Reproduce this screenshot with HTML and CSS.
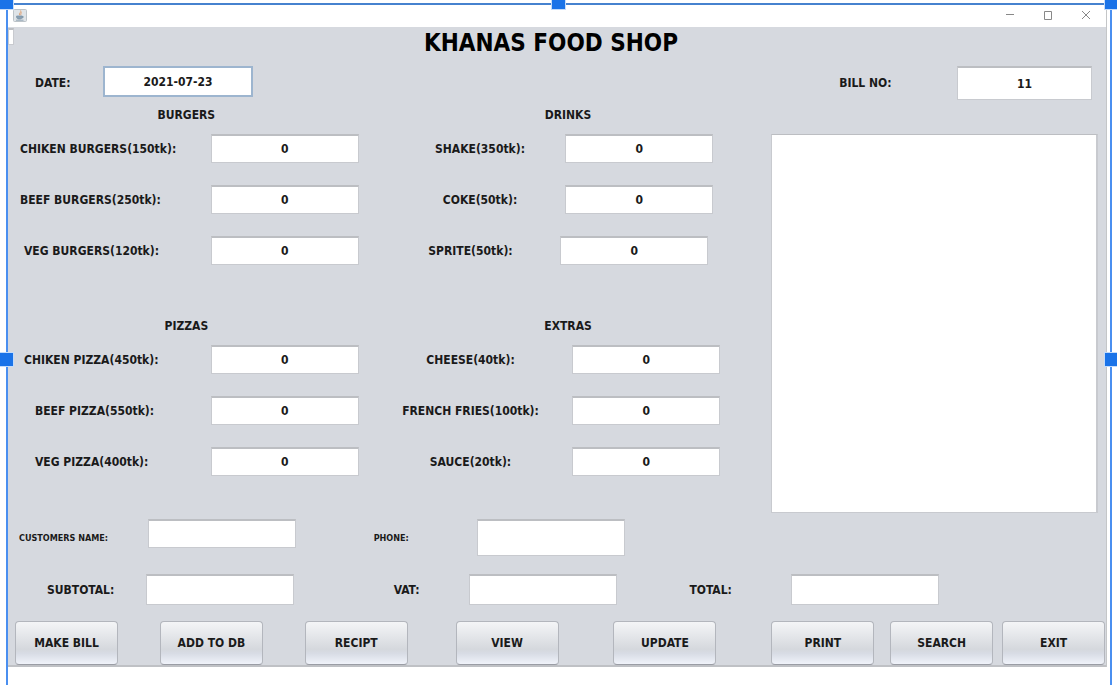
FILE: index.html
```html
<!DOCTYPE html>
<html lang="en">
<head>
<meta charset="utf-8">
<title>Khanas Food Shop</title>
<link rel="stylesheet" href="styles.css">
</head>
<body>
<div class="selection">
  <span class="handle top left"></span>
  <span class="handle top center"></span>
  <span class="handle top right"></span>
  <span class="handle middle left"></span>
  <span class="handle middle right"></span>

  <div class="window">
    <header class="titlebar">
      <svg class="app-icon" viewBox="0 0 14 13" aria-hidden="true">
        <rect x="0.5" y="0.5" width="13" height="12" rx="1" fill="#dfe4e8" stroke="#bcc3c8"/>
        <path d="M7.6 1.5C9 3.4 5.2 4 6.8 6.3M8.800 3.600C7.300 4.600 7.600 5 8 6.200" fill="none" stroke="#dfa273"/>
        <path d="M3.600 7h5.600v1.200c0 1.200-1 1.800-2.800 1.800S3.600 9.400 3.600 8.200zM9.200 7.400c1.700-.3 1.600 1.400-.2 1.600M3 11.200h7.500" fill="#8aa0b2" stroke="#7f96a8" stroke-width=".8"/>
      </svg>
      <div class="controls">
        <button type="button" aria-label="Minimize"><svg viewBox="0 0 10 10"><path d="M1 4.500h8"/></svg></button>
        <button type="button" aria-label="Maximize"><svg viewBox="0 0 10 10"><path d="M1.500 1.500h7v8h-7z"/></svg></button>
        <button type="button" aria-label="Close"><svg viewBox="0 0 10 10"><path d="M1 1l8 8M9 1L1 9"/></svg></button>
      </div>
    </header>

    <form class="panel">
      <input class="stub" aria-label="Hidden field">
      <h1>KHANAS FOOD SHOP</h1>

      <div class="bill-info">
        <label for="date">DATE:</label>
        <input id="date" class="date" value="2021-07-23">
        <label for="bill">BILL NO:</label>
        <input id="bill" class="bill" value="11">
      </div>

      <div class="main">
        <div class="column first">
          <section>
            <h2>BURGERS</h2>
            <div class="row"><label for="b1">CHIKEN BURGERS(150tk):</label><input id="b1" value="0"></div>
            <div class="row"><label for="b2">BEEF BURGERS(250tk):</label><input id="b2" value="0"></div>
            <div class="row indent"><label for="b3">VEG BURGERS(120tk):</label><input id="b3" value="0"></div>
          </section>
          <section>
            <h2>PIZZAS</h2>
            <div class="row indent"><label for="p1">CHIKEN PIZZA(450tk):</label><input id="p1" value="0"></div>
            <div class="row indent-wide"><label for="p2">BEEF PIZZA(550tk):</label><input id="p2" value="0"></div>
            <div class="row indent-wide"><label for="p3">VEG PIZZA(400tk):</label><input id="p3" value="0"></div>
          </section>
        </div>
        <div class="column second">
          <section class="drinks">
            <h2>DRINKS</h2>
            <div class="row"><label for="d1">SHAKE(350tk):</label><input id="d1" value="0"></div>
            <div class="row"><label for="d2">COKE(50tk):</label><input id="d2" value="0"></div>
            <div class="row wide"><label for="d3">SPRITE(50tk):</label><input id="d3" value="0"></div>
          </section>
          <section class="extras">
            <h2>EXTRAS</h2>
            <div class="row"><label for="e1">CHEESE(40tk):</label><input id="e1" value="0"></div>
            <div class="row"><label for="e2">FRENCH FRIES(100tk):</label><input id="e2" value="0"></div>
            <div class="row"><label for="e3">SAUCE(20tk):</label><input id="e3" value="0"></div>
          </section>
        </div>
        <textarea class="receipt" aria-label="Receipt"></textarea>
      </div>

      <div class="customer">
        <label for="name">CUSTOMERS NAME:</label><input id="name">
        <label for="phone">PHONE:</label><input id="phone" class="tall">
      </div>

      <div class="totals">
        <label for="subtotal">SUBTOTAL:</label><input id="subtotal">
        <label for="vat">VAT:</label><input id="vat">
        <label for="total">TOTAL:</label><input id="total">
      </div>

      <div class="actions">
        <button type="button">MAKE BILL</button>
        <button type="button">ADD TO DB</button>
        <button type="button">RECIPT</button>
        <button type="button">VIEW</button>
        <button type="button">UPDATE</button>
        <button type="button">PRINT</button>
        <button type="button">SEARCH</button>
        <button type="button">EXIT</button>
      </div>
    </form>
  </div>
</div>
</body>
</html>
```

FILE: styles.css
```css
* { box-sizing: border-box; }

body {
  margin: 0;
  padding: 3px 5px 0 6px;
  background: #fff;
  color: #1a1a1a;
  font: bold 12px/16px "DejaVu Sans Condensed", "DejaVu Sans", sans-serif;
  overflow: hidden;
}

.selection {
  position: relative;
  min-height: calc(100vh - 3px);
  padding-right: 3px;
  border: 2px solid #4a8ff0;
  border-top-color: #4682cf;
  border-bottom: 0;
}

.handle {
  position: absolute;
  z-index: 1;
  width: 15px;
  height: 15px;
  background: #1a73e8;
  border: 1px solid #c4dcfa;
}
.handle.top { top: -10px; }
.handle.middle { top: 51%; }
.handle.left { left: -9px; }
.handle.right { right: -9px; }
.handle.center { left: 50%; margin-left: -8px; }

.window { border-right: 1px solid #c4c6c8; }

.titlebar {
  display: flex;
  align-items: center;
  justify-content: space-between;
  height: 22px;
  padding: 0 15px 2px 5px;
  background: #fff;
}
.app-icon { width: 14px; height: 13px; }
.controls { display: flex; gap: 28px; }
.controls button {
  width: 10px;
  height: 10px;
  padding: 0;
  border: 0;
  background: none;
}
.controls svg {
  display: block;
  width: 10px;
  height: 10px;
  fill: none;
  stroke: #888;
}

.panel {
  position: relative;
  background: #d6d9df;
  border-bottom: 2px solid #bfc1c5;
}

h1, h2 { margin: 0; text-align: center; }
h1 {
  height: 39px;
  padding-right: 12px;
  font-size: 24px;
  line-height: 32px;
  color: #000;
}
h2 {
  padding-bottom: 9px;
  font-size: 12px;
  line-height: 20px;
}

input, textarea {
  display: block;
  border: 1px solid #c8cacf;
  border-top: 2px solid #bcbec2;
  border-radius: 0;
  background: #fff;
  color: #1a1a1a;
  font: inherit;
  outline: 0;
}
input {
  width: 148px;
  height: 29px;
  padding: 0;
  text-align: center;
}
.stub {
  position: absolute;
  top: 1px;
  left: 0;
  width: 6px;
  height: 17px;
}

.bill-info {
  display: grid;
  grid-template-columns: 95fr 737fr 118fr 149fr;
  align-items: center;
  padding-bottom: 5px;
}
.bill-info label:first-child { padding-left: 27px; }
.date {
  align-self: start;
  width: 150px;
  height: 31px;
  border: 2px solid #9db5cf;
}
.bill { width: 135px; height: 34px; }

.main {
  display: grid;
  grid-template-columns: 351fr 362fr 386fr;
}
.column { display: grid; align-content: start; gap: 51px; }
.row {
  display: flex;
  align-items: center;
  margin-bottom: 22px;
}
.row:last-child { margin-bottom: 0; }
.row label { flex: 1; white-space: nowrap; }

.first h2 { padding-left: 6px; }
.first .row { padding-left: 12px; }
.first .indent { padding-left: 16px; }
.first .indent-wide { padding-left: 27px; }

.second h2 { padding-left: 57px; }
.second label { text-align: center; }
.drinks .row { padding: 0 7px 0 36px; }
.drinks .wide { padding: 0 12px 0 22px; }
.extras .row { padding-left: 10px; }

.receipt {
  width: auto;
  height: 379px;
  margin: 29px 8px 0 51px;
  border-width: 1px 2px 1px 1px;
  resize: none;
}

.customer {
  display: grid;
  grid-template-columns: 140fr 226fr 103fr 630fr;
  padding-top: 6px;
  font-size: 9px;
}
.customer label { align-self: center; }
.customer label:first-child { padding-left: 11px; }
.tall { height: 37px; }

.totals {
  display: grid;
  grid-template-columns: 138fr 248fr 75fr 221fr 102fr 315fr;
  align-items: center;
  padding: 18px 0 16px;
}
.totals label:first-child { padding-left: 39px; }
.totals input { height: 31px; }

.actions {
  display: grid;
  grid-template-columns: 145fr 145fr 151fr 158fr 158fr 119fr 112fr 104fr;
  padding-left: 7px;
}
.actions button {
  width: 103px;
  height: 44px;
  padding: 0;
  border: 1px solid #b3b6bd;
  border-bottom-color: #9a9da5;
  border-radius: 4px;
  background: linear-gradient(#f4f5f7, #d5d8dd 65%, #d8dce5 75%, #f0f3fa);
  color: #1a1a1a;
  font: inherit;
}
```
